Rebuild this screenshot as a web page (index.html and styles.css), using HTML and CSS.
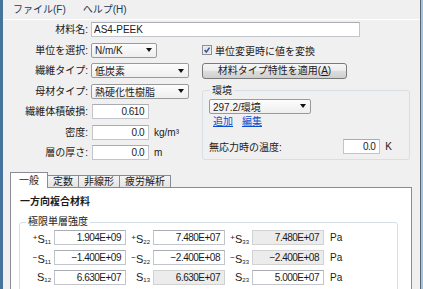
FILE: index.html
```html
<!DOCTYPE html>
<html lang="ja">
<head>
<meta charset="utf-8">
<link rel="stylesheet" href="styles.css">
</head>
<body>
<div class="frame">
  <div class="edge-l"></div>
  <div class="window">
    <div class="menubar"><span>ファイル(F)</span><span>ヘルプ(H)</span></div>
    <div class="form">
      <div class="lbl">材料名:</div>
      <div class="field name">AS4-PEEK</div>

      <div class="lbl">単位を選択:</div>
      <div class="combo w-unit"><span>N/m/K</span><i class="arrow"></i></div>
      <div class="check">
        <svg class="cb" width="10" height="10" viewBox="0 0 10 10"><rect x="0.5" y="0.5" width="9" height="9" fill="#f4f6f9" stroke="#8e8f8f"/><rect x="1.5" y="1.5" width="7" height="7" fill="#e1e6ee"/><path d="M2.6 5.1 L4.3 7.1 L7.6 2.6" fill="none" stroke="#3a4f8f" stroke-width="1.5"/></svg>
        <span>単位変更時に値を変換</span>
      </div>

      <div class="lbl">繊維タイプ:</div>
      <div class="combo w-type"><span>低炭素</span><i class="arrow"></i></div>
      <div class="btn">材料タイプ特性を適用(<u>A</u>)</div>

      <div class="lbl">母材タイプ:</div>
      <div class="combo w-type"><span>熱硬化性樹脂</span><i class="arrow"></i></div>
      <fieldset class="env">
        <legend>環境</legend>
        <div class="combo w-env"><span>297.2/環境</span><i class="arrow"></i></div>
        <div class="links"><a href="#">追加</a><a href="#">編集</a></div>
        <div class="temp">
          <span class="grow">無応力時の温度:</span>
          <div class="field num w-temp">0.0</div>
          <span class="unit">K</span>
        </div>
      </fieldset>

      <div class="lbl">繊維体積破損:</div>
      <div class="fld-row"><div class="field num w-small">0.610</div></div>

      <div class="lbl">密度:</div>
      <div class="fld-row"><div class="field num w-small">0.0</div><span class="unit">kg/m³</span></div>

      <div class="lbl">層の厚さ:</div>
      <div class="fld-row"><div class="field num w-small">0.0</div><span class="unit">m</span></div>
    </div>

    <div class="tabs">
      <div class="tab active">一般</div>
      <div class="tab">定数</div>
      <div class="tab">非線形</div>
      <div class="tab">疲労解析</div>
    </div>
    <div class="panel">
      <div class="heading">一方向複合材料</div>
      <fieldset class="strength">
        <legend>極限単層強度</legend>
        <div class="sgrid">
          <div class="slbl"><span class="sup">+</span>S<sub>11</sub></div>
          <div class="field num">1.904E+09</div>
          <div class="slbl"><span class="sup">+</span>S<sub>22</sub></div>
          <div class="field num">7.480E+07</div>
          <div class="slbl"><span class="sup">+</span>S<sub>33</sub></div>
          <div class="field num off">7.480E+07</div>
          <div class="pa">Pa</div>

          <div class="slbl"><span class="sup">−</span>S<sub>11</sub></div>
          <div class="field num">−1.400E+09</div>
          <div class="slbl"><span class="sup">−</span>S<sub>22</sub></div>
          <div class="field num">−2.400E+08</div>
          <div class="slbl"><span class="sup">−</span>S<sub>33</sub></div>
          <div class="field num off">−2.400E+08</div>
          <div class="pa">Pa</div>

          <div class="slbl">S<sub>12</sub></div>
          <div class="field num">6.630E+07</div>
          <div class="slbl">S<sub>13</sub></div>
          <div class="field num off">6.630E+07</div>
          <div class="slbl">S<sub>23</sub></div>
          <div class="field num">5.000E+07</div>
          <div class="pa">Pa</div>
        </div>
      </fieldset>
    </div>
  </div>
  <div class="edge-r"></div>
</div>
</body>
</html>
```

FILE: styles.css
```css
* { box-sizing: border-box; }
html, body { margin: 0; padding: 0; }
body {
  width: 423px;
  height: 289px;
  overflow: hidden;
  font-family: "Liberation Sans", "Noto Sans CJK JP", sans-serif;
  font-size: 10px;
  color: #1b1b1b;
  background: #f0f0f0;
}
.frame { display: flex; height: 289px; }
.edge-l { width: 3px; flex: none; background: #44739b; }
.edge-r { width: 3px; flex: none; border-left: 1px solid #5d6670; background: #9ec5e6; }
.window {
  flex: 1;
  min-width: 0;
  display: flex;
  flex-direction: column;
  background: #f0f0f0;
}
.menubar {
  height: 20px;
  flex: none;
  border-bottom: 1px solid #ffffff;
  display: flex;
  align-items: center;
  gap: 17px;
  padding-left: 10px;
  color: #1e395b;
  line-height: 12px;
}

/* top form */
.form {
  display: grid;
  grid-template-columns: 85px 108px 208px;
  column-gap: 3px;
  grid-auto-rows: 15px;
  row-gap: 5.5px;
  padding-top: 2px;
  flex: none;
}
.lbl {
  grid-column: 1;
  text-align: right;
  line-height: 15px;
  white-space: nowrap;
}
.field {
  height: 15px;
  background: #ffffff;
  border: 1px solid #c2c6cc;
  border-top-color: #a9acb2;
  line-height: 13px;
  padding: 0 3px;
  white-space: nowrap;
  overflow: hidden;
}
.field.num { text-align: right; letter-spacing: -0.5px; padding-right: 4px; }
.field.off { background: #ececec; border-color: #d2d2d2; }
.name { grid-column: 2 / 4; width: 269px; padding-left: 2px; }
.combo {
  height: 15px;
  display: flex;
  align-items: center;
  justify-content: space-between;
  padding: 0 4px 0 3px;
  border: 1px solid #9a9a9a;
  border-radius: 2px;
  background: linear-gradient(#fdfdfd, #eeeeee);
  white-space: nowrap;
}
.arrow {
  width: 0;
  height: 0;
  border-left: 3.5px solid transparent;
  border-right: 3.5px solid transparent;
  border-top: 4px solid #111;
}
.w-unit { width: 66px; }
.w-type { width: 98px; }
.w-env { width: 102px; margin-top: 2px; }
.w-small { width: 57px; }
.w-temp { width: 37px; }

.check {
  grid-column: 3;
  display: flex;
  align-items: center;
  gap: 3px;
}
.cb { flex: none; }
.btn {
  grid-column: 3;
  width: 145px;
  height: 16px;
  border: 1px solid #7a7a7a;
  border-radius: 3px;
  background: linear-gradient(#f6f6f6 0%, #ebebeb 50%, #dddddd 51%, #cfcfcf 100%);
  text-align: center;
  line-height: 14px;
  white-space: nowrap;
}
.btn u { text-decoration: underline; }

.fld-row {
  grid-column: 2;
  display: flex;
  align-items: center;
  gap: 5px;
  padding-left: 1px;
}
.unit { white-space: nowrap; }

.env {
  grid-column: 3;
  grid-row: 4 / span 4;
  align-self: start;
  margin: 1px 0 0 0;
  padding: 0 17px 5px 6px;
  border: 1px solid #d5dfe5;
  border-radius: 3px;
  min-width: 0;
  height: 75px;
}
.env legend, .strength legend {
  padding: 0 2px;
  margin-left: 1px;
  line-height: 12px;
}
.links {
  display: flex;
  gap: 9px;
  margin-top: 2px;
  padding-left: 4px;
  line-height: 12px;
}
.links a { color: #0b4fd0; text-decoration: underline; }
.temp {
  display: flex;
  align-items: center;
  gap: 5px;
  margin-top: 11px;
}
.grow { margin-right: auto; white-space: nowrap; }

/* tabs */
.tabs {
  flex: none;
  display: flex;
  align-items: flex-end;
  height: 15px;
  margin-top: 12px;
  padding-left: 7px;
  position: relative;
  z-index: 1;
}
.tab {
  height: 12px;
  line-height: 11px;
  padding: 0 5px;
  border: 1px solid #898c95;
  border-bottom: none;
  background: linear-gradient(#f4f4f4, #e4e4e4);
  margin-left: -1px;
  white-space: nowrap;
}
.tab.active {
  height: 16px;
  margin-left: 0;
  margin-bottom: -1px;
  padding: 0 8px;
  line-height: 15px;
  background: #ffffff;
}
.panel {
  flex: 1;
  margin: 0 8px 0 7px;
  border: 1px solid #898c95;
  border-bottom: none;
  background: #ffffff;
  padding: 8px 0 0 9px;
  min-height: 0;
}
.heading {
  font-weight: bold;
  line-height: 12px;
}
.strength {
  margin: 8px 0 0 -1px;
  width: 379px;
  padding: 0 5px 8px 5px;
  border: 1px solid #d5dfe5;
  border-radius: 3px;
  min-width: 0;
}
.sgrid {
  display: grid;
  grid-template-columns: 29px 72px 27px 72px 27px 72px auto;
  grid-auto-rows: 15px;
  row-gap: 5px;
  margin-top: 2px;
}
.slbl {
  text-align: right;
  padding-right: 3px;
  font-size: 11px;
  line-height: 15px;
  white-space: nowrap;
}
.slbl .sup { font-size: 8px; vertical-align: 3px; }
.slbl sub { font-size: 6px; vertical-align: -1px; }
.pa { padding-left: 6px; line-height: 15px; }
```
